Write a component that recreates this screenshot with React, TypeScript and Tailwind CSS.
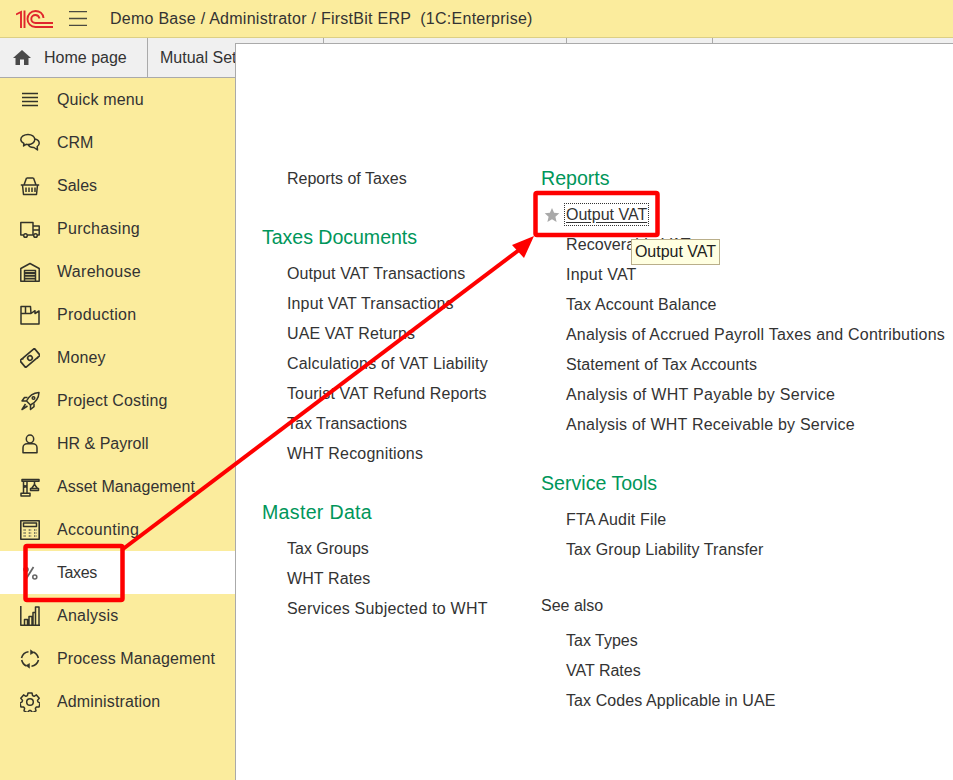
import type { ReactNode } from 'react';

const Icon = ({ children }: { children: ReactNode }) => (
  <svg viewBox="0 0 20 20" className="w-5 h-5 shrink-0" fill="none" stroke="#33332a" strokeWidth="1.500" strokeLinejoin="round">
    {children}
  </svg>
);

type MenuEntry = { label: string; icon: ReactNode; active?: boolean; track?: string };

const menu: MenuEntry[] = [
  {
    label: 'Quick menu',
    icon: <path d="M2 3.500h16M2 7.500h16M2 11.500h16M2 15.500h16" />,
  },
  {
    label: 'CRM',
    track: 'tracking-normal',
    icon: (
      <>
        <path d="M8 1.500c3.800 0 6.800 2.200 6.800 5s-3 5-6.800 5c-.7 0-1.300-.1-1.900-.2L3.600 13l.3-2.700C2 9.300.8 8 .8 6.500c0-2.800 3.300-5 7.200-5z" />
        <path d="M15 6c2.500.6 4.200 2.200 4.200 4.200 0 1.300-.8 2.500-2 3.300l.3 3.500-3.500-2.500c-2.500.1-4.800-.8-5.700-2.600" />
      </>
    ),
  },
  {
    label: 'Sales',
    track: 'tracking-normal',
    icon: (
      <>
        <path d="M.8 9h18.400M2.500 9l1 9.500h13l1-9.500M6.500 2L4 9M13.500 2L16 9M6.500 2h7" />
        <path d="M6 11.500v4.500M9 11.500v4.500M12 11.500v4.500M15 11.500v4.500" />
      </>
    ),
  },
  {
    label: 'Purchasing',
    track: 'tracking-[0.3px]',
    icon: (
      <>
        <path d="M3.500 16H.8V3.500H13V16H7.500M13 7h6.200v9h-1.500M13 16h.5M13 11h6.200" />
        <circle cx="5.500" cy="16.500" r="1.800" />
        <circle cx="15.500" cy="16.500" r="1.800" />
      </>
    ),
  },
  {
    label: 'Warehouse',
    track: 'tracking-[0.3px]',
    icon: (
      <>
        <path d="M.8 6.500L10 1.500l9.200 5v12.700H.8V6.500z" />
        <path d="M4.500 19V8.500h11V19" />
        <path d="M5 11h10M5 13.800h10M5 16.600h10" strokeWidth="1.900" />
      </>
    ),
  },
  {
    label: 'Production',
    track: 'tracking-[0.3px]',
    icon: <path d="M1 19V1.500h4.500v7-7H10.500l.5 7 4-2.800v2.800L19 6v13H1zM1 8.500h10" />,
  },
  {
    label: 'Money',
    icon: (
      <g transform="rotate(-40 10 10)">
        <path d="M.5 5.500h3c0 .5.500 1 1 0h15v9h-3c-.5 0-1 .5-1 0H.5v-9z" strokeWidth="1.700" />
        <circle cx="10" cy="10" r="2.300" strokeWidth="1.600" />
      </g>
    ),
  },
  {
    label: 'Project Costing',
    icon: (
      <>
        <path d="M6.500 10C9 5 13 2 19 1.500c-.3 6-3.500 10-8.500 12.500l-4-4z" />
        <circle cx="13.500" cy="7" r="1.300" />
        <path d="M7.500 6.500H4.500L2 10h4M14 12.500v3.200L10.500 18.500V14M5.500 13l-3.500 5.500 5.500-3.500" />
      </>
    ),
  },
  {
    label: 'HR & Payroll',
    track: 'tracking-normal',
    icon: (
      <>
        <ellipse cx="10" cy="5" rx="3.700" ry="3.900" />
        <path d="M3 18.800v-5c0-2.500 2-4 4-4h6c2 0 4 1.500 4 4v5H3z" />
      </>
    ),
  },
  {
    label: 'Asset Management',
    track: 'tracking-normal',
    icon: (
      <>
        <path d="M2 2.500h17v1.800H2zM3.500 4.300v12M7 4.300v12M3.500 8l3.500 3M7 8l-3.500 3M14.500 4.300v3.200" />
        <path d="M1 19v-2.700h9V19H1z" />
        <path d="M11.500 11.500l3-4 3 4M10.500 11.500h8v2h-8z" />
      </>
    ),
  },
  {
    label: 'Accounting',
    track: 'tracking-[0.3px]',
    icon: (
      <>
        <rect x=".8" y=".8" width="18.400" height="18.400" strokeWidth="1.600" />
        <path d="M3.500 3h13v3.500h-13z" />
        <path d="M3.500 10h2.500M8.700 10h2.500M14 10h2.500M3.500 13h2.500M8.700 13h2.500M14 13h2.500M3.500 16h2.500M8.700 16h2.500M14 16h2.500" strokeWidth="1.700" strokeDasharray="1.200 .6" stroke="#5a5a4e" />
      </>
    ),
  },
  {
    label: 'Taxes',
    track: 'tracking-[-0.4px]',
    icon: (
      <>
        <path d="M13.500 4L6 16" strokeWidth="1.700" stroke="#666" />
        <circle cx="6" cy="6.500" r="2" stroke="#666" strokeWidth="1.600" />
        <circle cx="14.800" cy="14" r="2" stroke="#666" strokeWidth="1.600" />
      </>
    ),
    active: true,
  },
  {
    label: 'Analysis',
    track: 'tracking-[0.25px]',
    icon: (
      <>
        <path d="M.8 0v19.200H20" />
        <path d="M4.500 19v-5.500h3V19M9 19v-8.500h3V19M13 19V6.500h2.500M15.500 19V1h3.500v18" />
      </>
    ),
  },
  {
    label: 'Process Management',
    icon: (
      <>
        <path d="M1.500 9C2.500 5.500 5 3.300 8.500 2.800M18.500 11c-1 3.500-3.500 5.700-7 6.200M13.500 3c2.500 1.200 4.200 3.200 4.800 6M6.500 17c-2.500-1.200-4.200-3.200-4.800-6" strokeWidth="1.600" />
        <path d="M10.500 .8l3.500 2.700-3.500 2zM9.500 19.200l-3.500-2.700 3.500-2z" fill="#33332a" strokeWidth=".5" />
      </>
    ),
  },
  {
    label: 'Administration',
    icon: (
      <>
        <path d="M8 1h4l.6 2.600 1.500.7 2.300-1.400 2.800 3.400-1.700 2.100.4 1.500 2.100 1.100-.9 3.900-2.700.1-1 1.300.6 2.600-3.600 1.700-1.700-2.100h-1.400l-1.700 2.100-3.600-1.700.6-2.600-1-1.300-2.700-.1-.9-3.900 2.100-1.100.4-1.500L.8 6.300l2.800-3.400 2.300 1.400 1.500-.7L8 1z" />
        <circle cx="10" cy="10" r="3.300" />
      </>
    ),
  },
];

const Item = ({ children, className = 'tracking-[0.1px]' }: { children: ReactNode; className?: string }) => (
  <div className={`h-[30px] flex items-center pt-[2px] pl-[25px] whitespace-nowrap ${className}`}>{children}</div>
);

const Head = ({ children, className = '' }: { children: ReactNode; className?: string }) => (
  <div className={`h-[30px] flex items-center pt-[2px] mb-[6px] text-[19.6px] text-[#00965a] whitespace-nowrap ${className}`}>{children}</div>
);

export default function App() {
  return (
    <div className="relative w-[953px] h-[780px] overflow-hidden flex flex-col bg-white text-[16px] text-[#333] font-['Liberation_Sans',Arial,sans-serif]">
      {/* top bar */}
      <header className="h-[38px] shrink-0 flex items-center bg-[#fbec9d] border-b border-[#dccf85]">
        <svg viewBox="0 0 37 18" className="w-[37px] h-[18px] ml-[16px]" fill="none" stroke="#e0262c" strokeWidth="1.900">
          <path d="M0 4.500L5 2V18M8.500 .5V18" />
          <path d="M27.500 8C27 3.500 23.500 1 19.500 1 14.800 1 11.500 4.500 11.500 9s3.300 8 8 8H37" />
          <path d="M23.500 8.500C23 6.500 21.500 5 19.500 5c-2.500 0-4.200 1.800-4.200 4s1.700 4 4.200 4H37" />
        </svg>
        <svg viewBox="0 0 18 15" className="w-[18px] h-[15px] ml-[16px]" fill="none" stroke="#4a4a40" strokeWidth="1.300">
          <path d="M0 .7h18M0 7.500h18M0 14.300h18" />
        </svg>
        <span className="ml-[23px] whitespace-pre tracking-[0.26px]">Demo Base / Administrator / FirstBit ERP  (1C:Enterprise)</span>
      </header>

      {/* open tabs */}
      <nav className="h-[40px] shrink-0 flex bg-[#f0f0f0] border-b border-[#aaa]">
        <div className="w-[148px] flex items-center pl-[12px] gap-[12px] border-r border-[#aaa]">
          <svg viewBox="0 0 20 20" className="w-5 h-5" fill="#4a4a4a">
            <path d="M8 17v-5.500h4V17h4.500V10H19L10 2 1 10h2.500v7H8z" />
          </svg>
          <span>Home page</span>
        </div>
        <div className="w-[176px] flex items-center pl-[12px] border-r border-[#aaa] whitespace-nowrap overflow-hidden">Mutual Settlements</div>
        <div className="w-[243px] border-r border-[#aaa]" />
        <div className="w-[146px] border-r border-[#aaa]" />
      </nav>

      {/* sections */}
      <aside className="w-[236px] flex-1 bg-[#fbec9d]">
        {menu.map((m) => (
          <div key={m.label} className={`h-[43px] flex items-center pl-[20px] gap-[17px] ${m.active ? 'bg-white' : ''}`}>
            <Icon>{m.icon}</Icon>
            <span className={`whitespace-nowrap ${m.track ?? 'tracking-[0.14px]'}`}>{m.label}</span>
          </div>
        ))}
      </aside>

      {/* section panel, lies over the tabs */}
      <main className="absolute left-[235px] top-[43px] right-0 bottom-0 bg-white border-l border-t border-[#aaa] pt-[119px] pl-[26px] flex">
        <div className="w-[279px]">
          <Item className="">Reports of Taxes</Item>
          <Head className="mt-[29px] tracking-[-0.05px]">Taxes Documents</Head>
          <Item>Output VAT Transactions</Item>
          <Item className="tracking-[0.14px]">Input VAT Transactions</Item>
          <Item className="tracking-[0.13px]">UAE VAT Returns</Item>
          <Item className="tracking-[0.18px]">Calculations of VAT Liability</Item>
          <Item className="tracking-[0.12px]">Tourist VAT Refund Reports</Item>
          <Item className="">Tax Transactions</Item>
          <Item className="tracking-[0.19px]">WHT Recognitions</Item>
          <Head className="mt-[29px] tracking-[0.3px]">Master Data</Head>
          <Item className="">Tax Groups</Item>
          <Item>WHT Rates</Item>
          <Item className="tracking-[0.2px]">Services Subjected to WHT</Item>
        </div>
        <div>
          <Head>Reports</Head>
          <div className="h-[30px] flex items-center pt-[1px] pl-[3px] gap-[6px] whitespace-nowrap">
            <svg viewBox="0 0 16 16" className="w-4 h-4" fill="#a9a9a9">
              <path d="M8 1l2.100 4.800 5.200.5-3.900 3.500 1.200 5.100L8 12.200l-4.600 2.700 1.200-5.100L.7 6.300l5.200-.5L8 1z" />
            </svg>
            <span className="inline-block leading-[19px] underline underline-offset-2 outline-1 outline-dotted outline-[#333] outline-offset-[1px]">Output VAT</span>
          </div>
          <Item>Recoverable VAT</Item>
          <Item className="tracking-[0.2px]">Input VAT</Item>
          <Item className="tracking-[0.11px]">Tax Account Balance</Item>
          <Item className="tracking-[0.2px]">Analysis of Accrued Payroll Taxes and Contributions</Item>
          <Item className="tracking-[0.08px]">Statement of Tax Accounts</Item>
          <Item className="tracking-[0.29px]">Analysis of WHT Payable by Service</Item>
          <Item className="tracking-[0.22px]">Analysis of WHT Receivable by Service</Item>
          <Head className="mt-[29px]">Service Tools</Head>
          <Item className="tracking-[0.14px]">FTA Audit File</Item>
          <Item>Tax Group Liability Transfer</Item>
          <div className="h-[30px] flex items-center pt-[2px] mt-[26px] mb-[5px]">See also</div>
          <Item className="">Tax Types</Item>
          <Item className="">VAT Rates</Item>
          <Item className="tracking-[0.08px]">Tax Codes Applicable in UAE</Item>
        </div>
      </main>

      {/* hint */}
      <div className="absolute left-[631px] top-[239px] w-[89px] h-[26px] flex items-center justify-center bg-[#ffffe1] border border-[#b9ae8a] whitespace-nowrap text-[#222]">Output VAT</div>

      {/* red annotation */}
      <svg className="absolute inset-0 w-[953px] h-[780px] pointer-events-none" viewBox="0 0 953 780" fill="none">
        <rect x="25.500" y="546" width="97" height="54" rx="1.500" stroke="#fe0000" strokeWidth="4.500" />
        <rect x="535.500" y="193" width="122" height="42" rx="1.500" stroke="#fe0000" strokeWidth="4.500" />
        <path d="M123 549L519 250" stroke="#fe0000" strokeWidth="4" />
        <path d="M534 236L512 245L524 258Z" fill="#fe0000" />
      </svg>
    </div>
  );
}
